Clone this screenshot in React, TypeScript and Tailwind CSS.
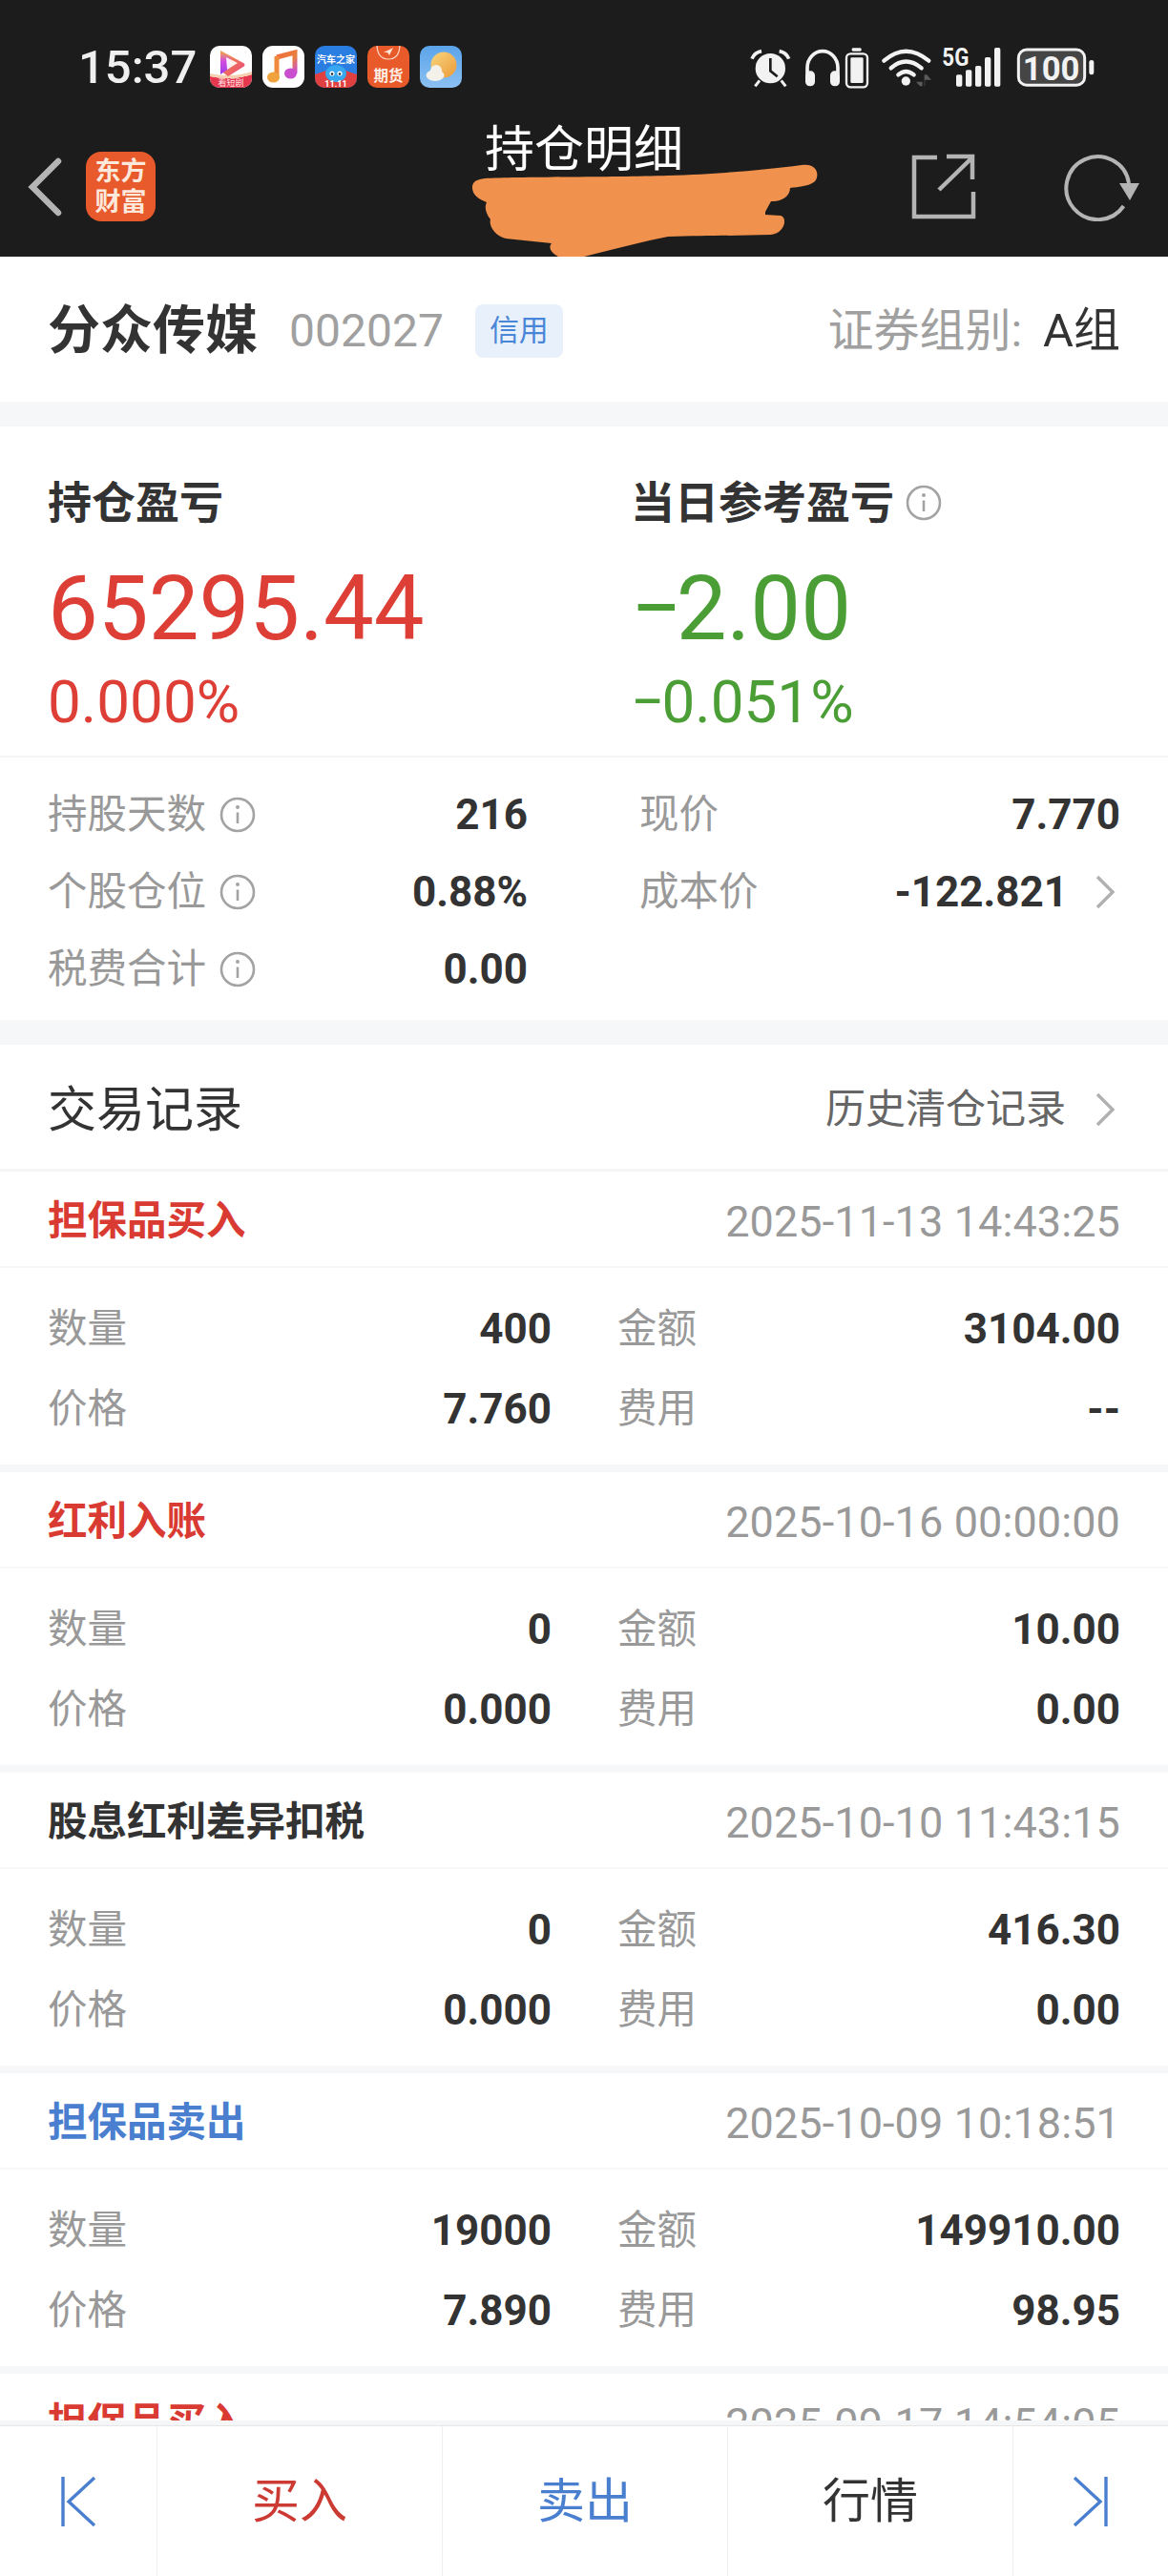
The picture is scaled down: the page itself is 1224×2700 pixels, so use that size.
import React from "react";

const FONT = "font-[family-name:Roboto,'Noto_Sans_CJK_SC',sans-serif]";

function InfoIcon() {
  return (
    <svg width="38" height="38" viewBox="0 0 38 38" className="shrink-0">
      <circle cx="19" cy="19" r="17" fill="none" stroke="#a3a3a3" strokeWidth="2.6" />
      <circle cx="19" cy="11" r="2" fill="#a3a3a3" />
      <path d="M19 16.5V28" stroke="#a3a3a3" strokeWidth="2.6" />
    </svg>
  );
}

function Chevron() {
  return (
    <svg width="22" height="36" viewBox="0 0 22 36" className="shrink-0">
      <path d="M3 2L19 18L3 34" fill="none" stroke="#b0b0b0" strokeWidth="3.4" />
    </svg>
  );
}

function AppIcons() {
  return (
    <div className="flex gap-[11px]">
      <svg width="44" height="44" viewBox="0 0 44 44">
        <defs>
          <linearGradient id="p1" x1="0" y1="0" x2="1" y2="1">
            <stop offset="0" stopColor="#f6a33b" />
            <stop offset="1" stopColor="#e83f7f" />
          </linearGradient>
          <linearGradient id="p2" x1="0" y1="0" x2="0" y2="1">
            <stop offset="0" stopColor="#f2b13f" />
            <stop offset="0.45" stopColor="#d14be0" />
            <stop offset="1" stopColor="#9a3fe6" />
          </linearGradient>
          <clipPath id="c44">
            <rect width="44" height="44" rx="10" />
          </clipPath>
        </defs>
        <g clipPath="url(#c44)">
          <rect width="44" height="44" fill="#fff" />
          <path d="M0 32Q22 37 44 30V44H0Z" fill="#e5384f" />
          <path d="M0 29Q22 34 44 27V30Q22 37 0 32Z" fill="#f6cfae" />
          <path d="M11 5L35 18Q38 20 35 22L19 32L11 26Z" fill="url(#p1)" />
          <path d="M11 5L22 13L20 24L11 30Z" fill="url(#p2)" />
          <path d="M17 12L29 18L18 25Z" fill="#fff" opacity="0.9" />
          <text x="22" y="41.5" textAnchor="middle" fontSize="9" fill="#fde3e3" fontFamily="Noto Sans CJK SC">看短剧</text>
        </g>
      </svg>
      <svg width="44" height="44" viewBox="0 0 44 44">
        <defs>
          <linearGradient id="m1" x1="0" y1="0" x2="1" y2="1">
            <stop offset="0" stopColor="#ef6b3c" />
            <stop offset="0.6" stopColor="#e9803f" />
            <stop offset="1" stopColor="#c94fd0" />
          </linearGradient>
        </defs>
        <rect width="44" height="44" rx="11" fill="#fff" />
        <path d="M15 12L34 7V29" fill="none" stroke="url(#m1)" strokeWidth="5" />
        <path d="M15 11V33" stroke="#ef8a3c" strokeWidth="5" />
        <ellipse cx="11.5" cy="33" rx="6.5" ry="5.5" fill="#f0a33c" />
        <ellipse cx="29.5" cy="29" rx="6.5" ry="5.5" fill="#c94fd0" />
      </svg>
      <svg width="44" height="44" viewBox="0 0 44 44">
        <defs>
          <clipPath id="c3">
            <rect width="44" height="44" rx="10" />
          </clipPath>
        </defs>
        <g clipPath="url(#c3)">
          <rect width="44" height="44" fill="#2a7de1" />
          <text x="22" y="18" textAnchor="middle" fontSize="10" fontWeight="700" fill="#fff" fontFamily="Noto Sans CJK SC">汽车之家</text>
          <path d="M0 30L12 26L32 26L44 30V44H0Z" fill="#e0403f" />
          <ellipse cx="22" cy="29" rx="11" ry="9" fill="#37a7ef" />
          <circle cx="18" cy="29" r="2.6" fill="#fff" />
          <circle cx="26" cy="29" r="2.6" fill="#fff" />
          <circle cx="18" cy="29.5" r="1.2" fill="#123" />
          <circle cx="26" cy="29.5" r="1.2" fill="#123" />
          <text x="22" y="43" textAnchor="middle" fontSize="9" fontWeight="700" fill="#fff" fontFamily="Roboto">11.11</text>
        </g>
      </svg>
      <svg width="44" height="44" viewBox="0 0 44 44">
        <defs>
          <clipPath id="c4">
            <rect width="44" height="44" rx="10" />
          </clipPath>
        </defs>
        <g clipPath="url(#c4)">
          <rect width="44" height="44" fill="#e85a2a" />
          <path d="M10 -2Q10 14 22 14Q34 14 34 -2" fill="none" stroke="#fbd9c8" strokeWidth="1.2" />
          <path d="M17 7L27 2L23 10L21 7Z" fill="#fde4d6" />
          <text x="22" y="37" textAnchor="middle" fontSize="15.5" fontWeight="700" fill="#fdeee6" fontFamily="Noto Sans CJK SC">期货</text>
        </g>
      </svg>
      <svg width="44" height="44" viewBox="0 0 44 44">
        <defs>
          <linearGradient id="s1" x1="0" y1="0" x2="0" y2="1">
            <stop offset="0" stopColor="#5ba4ea" />
            <stop offset="1" stopColor="#8cc1f2" />
          </linearGradient>
          <linearGradient id="s2" x1="0" y1="0" x2="1" y2="1">
            <stop offset="0" stopColor="#f9d67f" />
            <stop offset="1" stopColor="#eb9a3a" />
          </linearGradient>
        </defs>
        <rect width="44" height="44" rx="10" fill="url(#s1)" />
        <circle cx="25" cy="20" r="13.5" fill="url(#s2)" />
        <ellipse cx="16" cy="31" rx="9.5" ry="6" fill="#f3f1ea" />
        <circle cx="17" cy="26" r="6" fill="#f3f1ea" />
      </svg>
    </div>
  );
}

function StatusIcons() {
  const c = "#f2f2f2";
  return (
    <svg width="390" height="70" viewBox="0 0 1170 210" className="ml-auto mr-[64px]">
      <circle cx="112" cy="110" r="47" fill={c} />
      <path d="M112 78V118L134 136" fill="none" stroke="#1c1c1c" strokeWidth="8" />
      <path d="M54 80Q62 60 84 56" fill="none" stroke={c} strokeWidth="11" />
      <path d="M170 80Q162 60 140 56" fill="none" stroke={c} strokeWidth="11" />
      <path d="M64 166L78 148M160 166L146 148" stroke={c} strokeWidth="9" />
      <path d="M228 128V108a48 52 0 0 1 96 0V128" fill="none" stroke={c} strokeWidth="11" />
      <rect x="222" y="118" width="30" height="48" rx="14" fill={c} />
      <rect x="300" y="118" width="30" height="48" rx="14" fill={c} />
      <rect x="368" y="46" width="30" height="10" rx="4" fill={c} />
      <rect x="351" y="64" width="66" height="105" rx="13" fill="none" stroke={c} strokeWidth="7" />
      <rect x="364" y="76" width="40" height="80" rx="4" fill={c} />
      <path d="M469 86Q538 26 610 86" fill="none" stroke={c} strokeWidth="13" strokeLinecap="round" />
      <path d="M491 109Q538 68 587 109" fill="none" stroke={c} strokeWidth="13" strokeLinecap="round" />
      <path d="M514 130Q538 110 563 130" fill="none" stroke={c} strokeWidth="13" strokeLinecap="round" />
      <circle cx="538" cy="150" r="14" fill={c} />
      <path d="M590 132V166H582L570 152H590ZM596 130H604L618 146H598V166H596Z" fill="#5a5a5a" />
      <text x="652" y="102" fontSize="78" fontWeight="700" fill={c} fontFamily="Roboto" textLength="84" lengthAdjust="spacingAndGlyphs">5G</text>
      <rect x="696" y="130" width="19" height="37" rx="5" fill={c} />
      <rect x="726" y="115" width="19" height="52" rx="5" fill={c} />
      <rect x="756" y="102" width="19" height="65" rx="5" fill={c} />
      <rect x="786" y="75" width="19" height="92" rx="5" fill={c} />
      <rect x="816" y="45" width="19" height="122" rx="5" fill={c} />
      <rect x="892" y="51" width="208" height="112" rx="26" fill="#454545" stroke={c} strokeWidth="9" />
      <text x="995" y="146" textAnchor="middle" fontSize="104" fontWeight="700" fill={c} fontFamily="Roboto">100</text>
      <rect x="1114" y="84" width="15" height="46" rx="7" fill={c} />
    </svg>
  );
}

function Scribble() {
  return (
    <svg width="1224" height="269" viewBox="0 0 1224 269" className="absolute left-0 top-0 pointer-events-none">
      <path
        d="M508 187C540 185 640 186 700 184C760 182 800 178 840 173C852 171 858 178 856 186C855 192 848 195 828 197C828 206 818 212 808 211L802 222L802 225L818 226C826 228 822 245 808 246C770 247 740 247 700 248C670 254 640 262 612 269L585 269C578 265 574 260 578 255L530 250C518 247 512 236 514 230C508 222 508 216 510 212C502 209 494 204 495 195C496 190 500 188 508 187Z"
        fill="#f0914d"
      />
    </svg>
  );
}

function Header() {
  return (
    <div className="relative h-[269px] shrink-0 bg-[#1c1c1c] pt-[35px]">
      <div className="flex h-[70px] items-center pl-[82px]">
        <span className="mr-[14px] text-[49px] font-medium leading-none text-[#efefef]">15:37</span>
        <AppIcons />
        <StatusIcons />
      </div>
      <div className="mt-[25px] grid h-[102px] grid-cols-[1fr_auto_1fr] text-white">
        <div className="flex items-end pl-[28px]">
          <svg width="38" height="62" viewBox="0 0 38 62" className="mb-[5px] mr-[24px]">
            <path d="M33 4L6 31L33 58" fill="none" stroke="#b4b4b4" strokeWidth="6.5" strokeLinecap="round" />
          </svg>
          <div className="flex h-[73px] w-[73px] flex-col items-center justify-center rounded-[16px] bg-[#e85a2c] text-[27px] font-bold leading-[32px] text-[#fde8dc]">
            <span>东方</span>
            <span>财富</span>
          </div>
        </div>
        <div className="self-start pt-[3px] text-[52px] leading-[50px]">持仓明细</div>
        <div className="flex items-end justify-end pr-[27px]">
          <svg width="72" height="72" viewBox="0 0 72 72" className="mr-[88px]">
            <path d="M29 5H5V67H67V41M31 39L66 5M39 4H66V28" fill="none" stroke="#b4b4b4" strokeWidth="4.5" />
          </svg>
          <svg width="84" height="78" viewBox="0 0 84 78">
            <path d="M64.5 62A33 33 0 1 1 70 38" fill="none" stroke="#b4b4b4" strokeWidth="4" />
            <path d="M60 38H81L71 56Z" fill="#b4b4b4" />
          </svg>
        </div>
      </div>
      <Scribble />
    </div>
  );
}

function Stat({ label, value, info, chevron }: { label?: string; value?: string; info?: boolean; chevron?: boolean }) {
  if (!label) return <div />;
  return (
    <div className="flex h-[81px] items-center">
      <span className="text-[41.5px] leading-none text-[#999999]">{label}</span>
      {info && (
        <span className="ml-[14px]">
          <InfoIcon />
        </span>
      )}
      <span className="ml-auto text-[44px] font-bold leading-none text-[#333333]">{value}</span>
      {chevron && (
        <span className="ml-[28px] mr-[5px]">
          <Chevron />
        </span>
      )}
    </div>
  );
}

type Rec = { title: string; color: string; date: string; qty: string; amt: string; price: string; fee: string };

const RECS: Rec[] = [
  { title: "担保品买入", color: "text-[#d93a32]", date: "2025-11-13 14:43:25", qty: "400", amt: "3104.00", price: "7.760", fee: "--" },
  { title: "红利入账", color: "text-[#d93a32]", date: "2025-10-16 00:00:00", qty: "0", amt: "10.00", price: "0.000", fee: "0.00" },
  { title: "股息红利差异扣税", color: "text-[#333333]", date: "2025-10-10 11:43:15", qty: "0", amt: "416.30", price: "0.000", fee: "0.00" },
  { title: "担保品卖出", color: "text-[#4a7fd0]", date: "2025-10-09 10:18:51", qty: "19000", amt: "149910.00", price: "7.890", fee: "98.95" },
  { title: "担保品买入", color: "text-[#d93a32]", date: "2025-09-17 14:54:05", qty: "", amt: "", price: "", fee: "" },
];

function Pair({ label, value }: { label: string; value: string }) {
  return (
    <div className="flex h-[84px] items-center justify-between">
      <span className="text-[41.5px] leading-none text-[#999999]">{label}</span>
      <span className="text-[44px] font-bold leading-none text-[#333333]">{value}</span>
    </div>
  );
}

function Card({ r }: { r: Rec }) {
  return (
    <div>
      <div className="flex h-[101px] items-center justify-between border-b-[2px] border-[#f8f8f8] bg-white px-[50px] pt-[5px]">
        <span className={`text-[41.5px] font-bold leading-none ${r.color}`}>{r.title}</span>
        <span className="text-[45px] leading-none tracking-[0.1px] text-[#999999]">{r.date}</span>
      </div>
      <div className="grid h-[206px] grid-cols-[528px_527px] content-center gap-x-[69px] bg-white px-[50px] pt-[6px]">
        <Pair label="数量" value={r.qty} />
        <Pair label="金额" value={r.amt} />
        <Pair label="价格" value={r.price} />
        <Pair label="费用" value={r.fee} />
      </div>
      <div className="h-[8px] bg-[#f6f7f9]" />
    </div>
  );
}

function BottomBar() {
  return (
    <div className="h-[163px] shrink-0 bg-white">
      <div className="h-[6px] border-b-[1px] border-[#e6e6e6] bg-[#f5f6f8]" />
      <div className="grid h-[157px] grid-cols-[164px_299px_299px_299px_163px] text-[50px] leading-none">
        <div className="flex items-center justify-center">
          <svg width="38" height="54" viewBox="0 0 38 54">
            <path d="M3 1V53M36 2L9 27L36 52" fill="none" stroke="#4a7fd0" strokeWidth="3.4" />
          </svg>
        </div>
        <div className="flex items-center justify-center border-l border-[#f0f0f0] text-[#cc3b33]">买入</div>
        <div className="flex items-center justify-center border-l border-[#f0f0f0] text-[#4a7fd0]">卖出</div>
        <div className="flex items-center justify-center border-l border-[#f0f0f0] text-[#333333]">行情</div>
        <div className="flex items-center justify-center border-l border-[#f0f0f0]">
          <svg width="38" height="54" viewBox="0 0 38 54">
            <path d="M35 1V53M2 2L29 27L2 52" fill="none" stroke="#4a7fd0" strokeWidth="3.4" />
          </svg>
        </div>
      </div>
    </div>
  );
}

export default function App() {
  return (
    <div className={`flex h-[2700px] w-[1224px] flex-col overflow-hidden bg-white ${FONT}`}>
      <Header />
      <div className="min-h-0 flex-1 overflow-hidden">
        <div className="flex h-[152px] items-center px-[50px] pt-[3px]">
          <span className="text-[55px] font-bold leading-none text-[#333333]">分众传媒</span>
          <span className="ml-[33px] text-[48px] leading-none text-[#a0a0a0]">002027</span>
          <span className="ml-[33px] flex h-[56px] w-[92px] items-center justify-center rounded-[8px] bg-[#e8f1fb] text-[31px] leading-none text-[#4a86d8]">信用</span>
          <span className="ml-auto text-[48px] leading-none text-[#a0a0a0]">证券组别:</span>
          <span className="ml-[22px] text-[49px] leading-none text-[#333333]">A组</span>
        </div>
        <div className="h-[26px] bg-[#f6f7f9]" />

        <div className="grid h-[347px] grid-cols-[611px_1fr] border-b-[2px] border-[#f5f5f5] px-[50px] pt-[57px]">
          <div>
            <div className="h-[46px] text-[46px] font-bold leading-[46px] text-[#333333]">持仓盈亏</div>
            <div className="mt-[41px] h-[94px] text-[94px] leading-[94px] text-[#dd3e36]">65295.44</div>
            <div className="mt-[20px] text-[62px] leading-[62px] text-[#dd3e36]">0.000%</div>
          </div>
          <div>
            <div className="flex h-[46px] items-center text-[46px] font-bold leading-[46px] text-[#333333]">
              当日参考盈亏
              <span className="ml-[12px]">
                <InfoIcon />
              </span>
            </div>
            <div className="mt-[41px] h-[94px] text-[94px] leading-[94px] text-[#4a9e35]">
              <span className="-mr-[6px]">−</span>2.00
            </div>
            <div className="mt-[20px] text-[62px] leading-[62px] text-[#4a9e35]">
              <span className="-mr-[3px]">−</span>0.051%
            </div>
          </div>
        </div>

        <div className="grid h-[275px] grid-cols-[503px_504px] content-start gap-x-[117px] px-[50px] pt-[19px]">
          <Stat label="持股天数" value="216" info />
          <Stat label="现价" value="7.770" />
          <Stat label="个股仓位" value="0.88%" info />
          <Stat label="成本价" value="-122.821" chevron />
          <Stat label="税费合计" value="0.00" info />
          <Stat />
        </div>
        <div className="h-[26px] bg-[#f6f7f9]" />

        <div className="flex h-[133px] items-center border-b-[3px] border-[#f5f6f8] px-[50px] pt-[6px]">
          <span className="text-[51px] leading-none text-[#333333]">交易记录</span>
          <span className="ml-auto text-[42px] leading-none text-[#666666]">历史清仓记录</span>
          <span className="ml-[30px] mr-[5px]">
            <Chevron />
          </span>
        </div>

        {RECS.map((r, i) => (
          <Card key={i} r={r} />
        ))}
      </div>
      <BottomBar />
    </div>
  );
}
